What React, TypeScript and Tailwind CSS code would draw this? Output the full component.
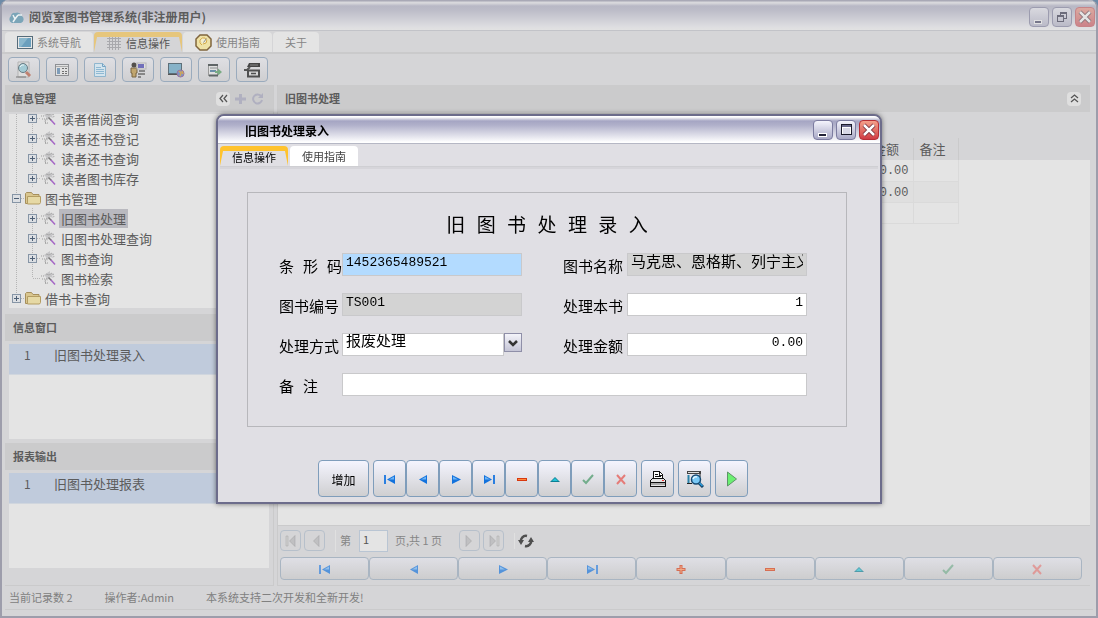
import React, { useState } from "react";
import clsx from "clsx";

type IconProps = { className?: string };

const NavIcon: React.FC<{ name: string }> = ({ name }) => {
  return (
    <svg width="14" height="12" viewBox="0 0 14 12" aria-hidden="true">
      {name === "first" && (
        <>
          <path d="M1 2h2v9H1z" fill="#2b7fe0" />
          <path d="M12 2v9L4 6.5z" fill="#1272dd" />
          <path d="M11 3.5v3H6z" fill="#6db4f5" />
        </>
      )}
      {name === "prev" && (
        <>
          <path d="M11 2v9L3 6.5z" fill="#1272dd" />
          <path d="M10 3.5v3H5z" fill="#6db4f5" />
        </>
      )}
      {name === "next" && (
        <>
          <path d="M3 2v9l9-4.5z" fill="#1272dd" />
          <path d="M4 3.5v3h5z" fill="#6db4f5" />
        </>
      )}
      {name === "last" && (
        <>
          <path d="M11 2h2v9h-2z" fill="#2b7fe0" />
          <path d="M2 2v9l8-4.5z" fill="#1272dd" />
          <path d="M3 3.5v3h5z" fill="#6db4f5" />
        </>
      )}
      {name === "add" && (
        <>
          <path d="M2.5 5h9v3h-9zM5.5 2h3v9h-3z" fill="#d8390f" />
          <path d="M3.5 6h7v1h-7zM6.5 3h1v7h-1z" fill="#ff9660" />
        </>
      )}
      {name === "remove" && (
        <>
          <path d="M2 5h10v3H2z" fill="#d8390f" />
          <path d="M3 6h8v1H3z" fill="#ff8a3c" />
        </>
      )}
      {name === "up" && (
        <>
          <path d="M2 9l5-5 5 5z" fill="#0b7f94" />
          <path d="M4 8l3-3 3 3z" fill="#25c3d6" />
        </>
      )}
      {name === "save" && <path d="M2 7l3 3 7-8" fill="none" stroke="#73ad8c" strokeWidth="2" />}
      {name === "cancel" && <path d="M3 2l8 9M11 2l-8 9" fill="none" stroke="#e57c78" strokeWidth="2" />}
    </svg>
  );
};

const LogoIcon = () => (
  <svg width="17" height="14" viewBox="0 0 17 14" aria-hidden="true">
    <path d="M4 13a4 4 0 0 1-1-7 3 3 0 0 1 4-3 5 5 0 0 1 7 3 4 4 0 0 1-1 7z" fill="#7ba5b8" />
    <path d="M5 5l2 4 3-4M7 9l-2 3M10 5h4" fill="none" stroke="#edf2f4" strokeWidth="1.5" />
  </svg>
);

const ScreenIcon = () => (
  <svg width="16" height="13" viewBox="0 0 16 13" aria-hidden="true">
    <rect x=".5" y=".5" width="15" height="12" fill="#e8e8e8" stroke="#566c7a" />
    <rect x="2" y="2" width="12" height="9" fill="#6a9fbd" />
    <path d="M2 2h9L4 11H2z" fill="#8ab7cd" />
  </svg>
);

const GridIcon = () => (
  <svg width="16" height="16" viewBox="0 0 16 16" aria-hidden="true" shapeRendering="crispEdges">
    <path d="M1 3.5h14M1 6.5h14M1 9.5h14M1 12.5h14M3.5 1v14M6.5 1v14M9.5 1v14M12.5 1v14" stroke="#a9a9ad" fill="none" />
  </svg>
);

const GuideIcon = () => (
  <svg width="17" height="17" viewBox="0 0 17 17" aria-hidden="true">
    <path d="M5 1h7l4 4v7l-4 4H5l-4-4V5z" fill="#efe2a6" stroke="#80653d" strokeWidth="1.5" />
    <path d="M5 6q2-3 5-2 3 3 1 5l-3 1M5 6v3l2 2" fill="#f5efcf" stroke="#d3aa49" />
    <path d="M8.5 8.5l3-4" stroke="#8c8c8c" />
  </svg>
);

const SearchPageIcon = () => (
  <svg width="18" height="18" viewBox="0 0 18 18" aria-hidden="true">
    <path d="M3 1h11v15H3z" fill="#dedede" stroke="#b3b3b3" />
    <circle cx="8" cy="7" r="4.5" fill="#a3cbd5" stroke="#697b83" />
    <path d="M5 6q2-3 4-2" stroke="#e8f4f5" fill="none" />
    <path d="M11 11l4 4" stroke="#bf8170" strokeWidth="3" />
    <path d="M1 16h10" stroke="#7a7a7a" />
  </svg>
);

const DetailIcon = () => (
  <svg width="16" height="16" viewBox="0 0 16 16" aria-hidden="true" shapeRendering="crispEdges">
    <rect x="1.5" y="2.5" width="13" height="11" fill="#e1e1e1" stroke="#8e9094" />
    <path d="M2 4.5h12" stroke="#aaa" />
    <rect x="3" y="6" width="3" height="6" fill="#7f9db9" />
    <path d="M8 6.5h2M11 6.5h2M8 9.5h2M11 9.5h2M8 11.5h2M11 11.5h2" stroke="#707070" />
  </svg>
);

const DocIcon = () => (
  <svg width="16" height="16" viewBox="0 0 16 16" aria-hidden="true">
    <path d="M2.5 1.5h8l3 3v10h-11z" fill="#d4e4ed" stroke="#8fb6ce" />
    <path d="M10.5 1.5v3h3" fill="none" stroke="#72a3c4" />
    <path d="M4 5.5h5M4 7.5h8M4 9.5h8M4 11.5h8" stroke="#8fb9d3" />
  </svg>
);

const UserIcon = () => (
  <svg width="18" height="16" viewBox="0 0 18 16" aria-hidden="true">
    <circle cx="5" cy="3" r="2.5" fill="#53504b" />
    <path d="M2 6h6v5H7v4H3v-4H2z" fill="#c1a66f" stroke="#786744" />
    <rect x="8" y="1" width="9" height="6" fill="#e0e0e0" stroke="#b5b5b5" />
    <rect x="9" y="2" width="6" height="4" fill="#716fba" />
    <path d="M10 9h6M9 12h7M9 15h3" stroke="#6d6d6d" strokeWidth="1.5" />
  </svg>
);

const GlobeScreenIcon = () => (
  <svg width="18" height="16" viewBox="0 0 18 16" aria-hidden="true">
    <rect x="1.5" y="1.5" width="13" height="10" fill="#86b2c8" stroke="#5d6f79" />
    <path d="M1 12.5h12" stroke="#555" />
    <circle cx="13.5" cy="11.5" r="3.5" fill="#7e94c5" stroke="#9a73a0" />
    <path d="M12 9l2 2-1 3M15 9l1 3" stroke="#d0a55a" fill="none" strokeWidth="1.5" />
  </svg>
);

const ImportIcon = () => (
  <svg width="16" height="16" viewBox="0 0 16 16" aria-hidden="true">
    <rect x="2.5" y="2.5" width="9" height="11" fill="#dfdfdf" stroke="#999" />
    <path d="M2 3h10M3 13.5h9" stroke="#5f6566" strokeWidth="2" />
    <path d="M4 6h7" stroke="#8a8f90" />
    <path d="M4 9h6" stroke="#6b8fa8" strokeWidth="2" />
    <path d="M9 9h3V6.5l4 3.5-4 3.5V11H9z" fill="#79ab83" />
  </svg>
);

// printer with its lid tilted back
const PrintIcon = () => (
  <svg width="18" height="16" viewBox="0 0 18 16" aria-hidden="true">
    <path d="M6 1h11v4H4z" fill="#454545" />
    <path d="M7 3h8" stroke="#8b8b8b" />
    <path d="M1 8h3l3-3" fill="none" stroke="#565656" strokeWidth="2" />
    <path d="M5 8.5h11v6H5z" fill="#d8d8d8" stroke="#505050" strokeWidth="2" />
    <path d="M8 11.5h5" stroke="#505050" strokeWidth="1.5" />
  </svg>
);

const PrinterIcon = () => (
  <svg width="18" height="18" viewBox="0 0 18 18" aria-hidden="true" shapeRendering="crispEdges">
    <path d="M4.5 9v-7.5h6l3 3v4.5z" fill="#fff" stroke="#111" />
    <path d="M6 4.5h3M6 6.5h6M10.5 2v3h3" stroke="#111" fill="none" />
    <path d="M3.5 8.5h11l2 2v5.5h-15v-5.5z" fill="#e6e6e6" stroke="#111" />
    <path d="M2 12.5h14" stroke="#111" />
    <path d="M2 14h14" stroke="#aaa" strokeWidth="2" />
    <rect x="13" y="10" width="2" height="1" fill="#e33" />
  </svg>
);

const PreviewIcon = () => (
  <svg width="18" height="18" viewBox="0 0 18 18" aria-hidden="true">
    <path d="M1 1h14v3H1z" fill="#444" />
    <path d="M2 2h11v1H2z" fill="#e0e0e0" />
    <path d="M1.5 5h2v8h-2z" fill="#2b82a8" />
    <path d="M1 13.5h5M14 4v3" stroke="#222" />
    <circle cx="10" cy="9.5" r="4.5" fill="#79c8f5" stroke="#174a72" strokeWidth="1.5" />
    <path d="M7 9q1-3 4-2" stroke="#e3f6ff" fill="none" strokeWidth="1.5" />
    <path d="M13 13l4 4" stroke="#123f60" strokeWidth="3" />
    <path d="M13.5 13l3 3" stroke="#2fa0e0" strokeWidth="1.5" />
  </svg>
);

const PlayIcon = () => (
  <svg width="14" height="16" viewBox="0 0 14 16" aria-hidden="true">
    <path d="M2.5 1v14l9-7z" fill="#6bf072" stroke="#5d9468" />
  </svg>
);

const RefreshIcon = () => (
  <svg width="16" height="16" viewBox="0 0 16 16" aria-hidden="true">
    <path d="M3 9a5 5 0 0 1 6-6M13 7a5 5 0 0 1-6 6" fill="none" stroke="#4f4f4f" strokeWidth="2.5" />
    <path d="M0 7h6l-3 5zM16 9h-6l3-5z" fill="#4f4f4f" />
  </svg>
);

const FolderIcon = () => (
  <svg width="16" height="14" viewBox="0 0 16 14" className="shrink-0" aria-hidden="true">
    <path d="M.5 12.5v-10l1-1h5l1.5 2h6v9z" fill="#d9c68f" stroke="#a68f5b" />
    <path d="M2.5 5.5h13v6l-1 1.5h-12z" fill="#e6d9a5" stroke="#b49d62" />
  </svg>
);

const WandIcon = () => (
  <svg width="16" height="16" viewBox="0 0 16 16" className="shrink-0" aria-hidden="true">
    <path d="M3 5l3-2 3-2v3l4-1-2 3 2 2-4-1-3 4-1-4z" fill="#c6c6c8" />
    <path d="M5 4l3 1 3-2M6 8l-2 3 1 3" fill="none" stroke="#a9a9a9" />
    <path d="M0 6h4M1 9h3M4 13h3M12 4l1 3" stroke="#9c9c9c" strokeDasharray="1 1" />
    <path d="M7.5 7.5l3 3" stroke="#777" strokeWidth="1.5" />
    <path d="M10 10l4 4.5" stroke="#a566c6" strokeWidth="1.5" />
  </svg>
);

const PageArrow: React.FC<{ bar?: boolean; flip?: boolean }> = ({ bar, flip }) => (
  <svg width="14" height="14" viewBox="0 0 14 14" className={clsx(flip && "rotate-180")} aria-hidden="true">
    {bar && <path d="M2 2h2v10H2z" fill="#cfcfcf" stroke="#a4a4a6" strokeWidth=".5" />}
    <path d="M11 1.5v11L5.5 7z" fill="#c0c0c2" stroke="#9f9fa1" strokeWidth=".5" />
  </svg>
);

const Chevrons: React.FC<IconProps> = ({ className }) => (
  <svg width="11" height="11" viewBox="0 0 11 11" className={className} aria-hidden="true">
    <path d="M5 2L2 5.5 5 9M9 2L6 5.5 9 9" fill="none" stroke="#555" strokeWidth="1.25" />
  </svg>
);

// one 16px cell of the tree: dotted guide lines with an optional expander box
const TreeCell: React.FC<{ box?: "plus" | "minus"; end?: boolean; branch?: boolean }> = ({ box, end, branch }) => (
  <svg width="16" height="20" viewBox="0 0 16 20" className="shrink-0" aria-hidden="true" shapeRendering="crispEdges">
    <path d={end ? "M7.5 0v10" : "M7.5 0v20"} stroke="#b5b5b5" strokeDasharray="1 1" />
    {branch && <path d="M8 10.5h8" stroke="#b5b5b5" strokeDasharray="1 1" />}
    {box && (
      <>
        <rect x="3.5" y="6.5" width="8" height="8" fill="#dcdfe3" stroke="#8695a6" />
        <path d="M5 10.5h5" stroke="#4d5f75" />
        {box === "plus" && <path d="M7.5 8v5" stroke="#4d5f75" />}
      </>
    )}
  </svg>
);

const treeRows = [
  { label: "读者借阅查询", level: 2, open: false },
  { label: "读者还书登记", level: 2, open: false },
  { label: "读者还书查询", level: 2, open: false },
  { label: "读者图书库存", level: 2, open: false },
  { label: "图书管理", level: 1, open: true },
  { label: "旧图书处理", level: 2, open: false },
  { label: "旧图书处理查询", level: 2, open: false },
  { label: "图书查询", level: 2, open: false },
  { label: "图书检索", level: 2, open: false, leaf: true },
  { label: "借书卡查询", level: 1, open: false, end: true },
];

const tools = [
  { label: "查找", icon: <SearchPageIcon /> },
  { label: "明细", icon: <DetailIcon /> },
  { label: "文档", icon: <DocIcon /> },
  { label: "用户", icon: <UserIcon /> },
  { label: "网络", icon: <GlobeScreenIcon /> },
  { label: "导入", icon: <ImportIcon /> },
  { label: "打印", icon: <PrintIcon /> },
];

const gridNav = [
  ["first", "首记录"],
  ["prev", "上一条"],
  ["next", "下一条"],
  ["last", "末记录"],
  ["add", "新增"],
  ["remove", "删除"],
  ["up", "编辑"],
  ["save", "保存"],
  ["cancel", "取消"],
];

const Tab: React.FC<{ label: string; active?: boolean; dim?: boolean; icon?: React.ReactNode }> = ({ label, active, dim, icon }) => (
  <button
    type="button"
    className={clsx(
      "h-5 rounded-t-sm text-[11px] leading-4",
      active && dim && "bg-[#e6c67c] pt-[5px] text-[#555]",
      active && !dim && "bg-[#ffc32e] pt-[5px] text-black",
      !active && dim && "bg-[#e4e4e4] text-[#868686]",
      !active && !dim && "bg-white text-[#444]"
    )}
  >
    <span
      className={clsx(
        "flex items-center gap-1 px-3",
        active && "h-[15px] pb-1 [clip-path:polygon(3px_0,calc(100%-3px)_0,100%_100%,0_100%)]",
        active && dim && "bg-[#d5d5d7]",
        active && !dim && "bg-[#e0dfe4]",
        !active && "h-5"
      )}
    >
      {icon}
      {label}
    </span>
  </button>
);

const ListPanel: React.FC<{ title: string; item: string }> = ({ title, item }) => (
  <section className="pb-1">
    <h2 className="h-[27px] bg-[#cbcbcc] px-2 text-[11px] leading-[27px] font-bold text-[#5c5c5c]">{title}</h2>
    <div className="mx-1 mt-[3px] h-[95px] bg-[#e4e4e4]">
      <table className="w-full">
        <tbody>
          <tr className="h-[30px] border-b border-[#d0d6de] bg-[#c0cbdc] align-top text-[13px] leading-[21px] text-[#5c5c5c]">
            <td className="w-[45px] pl-[15px] text-[12px]">1</td>
            <td>{item}</td>
          </tr>
        </tbody>
      </table>
    </div>
  </section>
);

const MainWindow = () => {
  const [selected, setSelected] = useState<string>("旧图书处理");

  return (
    <div className="flex min-h-screen flex-col rounded-t-lg border-x-2 border-b-2 border-[#9d9dab] bg-[#d5d5d7] text-[#5c5c5c]">
      <header className="flex h-[31px] items-center gap-1 rounded-t-lg border-b border-[#c2c3c8] bg-[linear-gradient(#a9a9b6_0px,#a9a9b6_1px,#d8d8dc_2px,#d8d8dc_3px,#b8b8c5_6px,#bcbcc8_10px,#dedee1_27px,#e2e2e2_30px)] pt-1 pr-px pl-[6px]">
        <LogoIcon />
        <h1 className="flex-1 text-[12px] font-bold">阅览室图书管理系统(非注册用户)</h1>
        <div className="flex gap-[3px]">
          <button type="button" aria-label="最小化" className="flex h-5 w-5 items-end justify-center rounded-sm border border-[#9c9caf] bg-linear-to-b from-[#d9d9df] to-[#bbbbc8] pb-[2px]">
            <svg width="10" height="4" viewBox="0 0 10 4"><rect x=".5" y=".5" width="7" height="3" fill="#77778a" stroke="#e2e2e2" /></svg>
          </button>
          <button type="button" aria-label="还原" className="flex h-5 w-5 items-center justify-center rounded-sm border border-[#9c9caf] bg-linear-to-b from-[#d9d9df] to-[#bbbbc8]">
            <svg width="12" height="12" viewBox="0 0 12 12" shapeRendering="crispEdges"><path d="M4.5 4V1.5h6v6H8M1.5 4.5h6v6h-6zM1 5.5h7M4 2.5h7" fill="none" stroke="#6c6c7b" /></svg>
          </button>
          <button type="button" aria-label="关闭" className="flex h-5 w-5 items-center justify-center rounded-sm border border-[#c78487] bg-linear-to-b from-[#dba9a0] to-[#cb8389]">
            <svg width="14" height="14" viewBox="0 0 14 14"><path d="M2 2l10 10M12 2L2 12" stroke="#7d6870" strokeWidth="4" /><path d="M2 2l10 10M12 2L2 12" stroke="#e4e4e4" strokeWidth="2.5" /></svg>
          </button>
        </div>
      </header>

      <nav className="flex h-[22px] items-end gap-px border-b border-[#cacacb] px-[3px]">
        <Tab dim label="系统导航" icon={<ScreenIcon />} />
        <Tab dim active label="信息操作" icon={<GridIcon />} />
        <Tab dim label="使用指南" icon={<GuideIcon />} />
        <Tab dim label="关于" />
      </nav>

      <div className="flex h-8 items-center gap-[6px] border-t border-[#cacacb] px-[6px]">
        {tools.map((tool) => (
          <button key={tool.label} type="button" aria-label={tool.label} className="flex h-[25px] w-8 items-center justify-center rounded border border-[#9aabbd] bg-linear-to-b from-[#dfdfe3] to-[#cfcfd1]">
            {tool.icon}
          </button>
        ))}
      </div>

      <main className="flex flex-1 gap-[3px] pr-[6px] pl-[3px]">
        <aside className="flex w-[269px] shrink-0 flex-col border-r border-b border-[#cacacb]">
          <div className="flex h-[27px] items-center gap-1 bg-[#cbcbcc] pr-[9px] pl-[7px]">
            <h2 className="flex-1 text-[11px] font-bold">信息管理</h2>
            <button type="button" aria-label="折叠" className="flex h-[14px] w-[14px] items-center justify-center rounded-sm bg-[#dfdfdf]"><Chevrons /></button>
            <button type="button" aria-label="添加">
              <svg width="13" height="13" viewBox="0 0 13 13"><path d="M6.5 2v10M1 7h11" stroke="#b0b0c0" strokeWidth="3" /></svg>
            </button>
            <button type="button" aria-label="刷新">
              <svg width="13" height="13" viewBox="0 0 13 13"><path d="M10 4a4.5 4.5 0 1 0 1 4" fill="none" stroke="#b0b0c0" strokeWidth="2" /><path d="M12 1v5H7z" fill="#b0b0c0" /></svg>
            </button>
          </div>
          <ul className="mx-1 mt-[2px] mb-[6px] flex h-[194px] flex-auto flex-col justify-end overflow-hidden bg-[#e4e4e4]">
            {treeRows.map((row) => (
              <li key={row.label} className="flex h-5 shrink-0 items-center text-[13px] leading-[19px]">
                {row.level === 1 ? (
                  <>
                    <TreeCell box={row.open ? "minus" : "plus"} end={row.end} branch />
                    <FolderIcon />
                  </>
                ) : (
                  <>
                    <TreeCell />
                    <TreeCell box={row.leaf ? undefined : "plus"} end={row.leaf} branch />
                    <WandIcon />
                  </>
                )}
                <button type="button" onClick={() => setSelected(row.label)} className={clsx("ml-[2px] px-[2px]", selected === row.label && "bg-[#b9b9bf]")}>
                  {row.label}
                </button>
              </li>
            ))}
          </ul>
          <ListPanel title="信息窗口" item="旧图书处理录入" />
          <div className="pb-[13px]">
            <ListPanel title="报表输出" item="旧图书处理报表" />
          </div>
        </aside>

        <section className="flex min-w-0 flex-1 flex-col border-b border-l border-[#cacacb]">
          <div className="flex h-[27px] items-center bg-[#cbcbcc] pr-[9px] pl-[7px]">
            <h2 className="flex-1 text-[11px] font-bold">旧图书处理</h2>
            <button type="button" aria-label="收起" className="flex h-[14px] w-[14px] items-center justify-center rounded-sm bg-[#dfdfdf]"><Chevrons className="rotate-90" /></button>
          </div>
          <div className="mt-[26px] flex-1 border-b border-[#cacacb] bg-[#e4e4e4]">
            <div className="bg-[linear-gradient(#d5d5d7_22px,transparent_22px)]">
              <table className="w-[681px] table-fixed border-collapse text-[12px]">
                <thead>
                  <tr className="h-[22px] text-left text-[13px] leading-5">
                    <th className="w-[587px]" />
                    <th className="w-[48px] border-r border-[#cacacb] pl-2 font-normal whitespace-nowrap">金额</th>
                    <th className="border-r border-[#cacacb] pl-[6px] font-normal">备注</th>
                  </tr>
                </thead>
                <tbody className="text-right font-['Liberation_Mono',monospace]">
                  <tr className="h-[21px] border-b border-[#dadada]">
                    <td />
                    <td className="border-r border-[#dadada] pt-[2px] pr-1">0.00</td>
                    <td className="border-r border-[#dadada]" />
                  </tr>
                  <tr className="h-[21px] border-b border-[#dadada] bg-[#dfdfdf]">
                    <td />
                    <td className="border-r border-[#dadada] pt-[2px] pr-1">0.00</td>
                    <td className="border-r border-[#dadada]" />
                  </tr>
                  <tr className="h-[21px] border-b border-[#dadada]">
                    <td />
                    <td className="border-r border-[#dadada]" />
                    <td className="border-r border-[#dadada]" />
                  </tr>
                </tbody>
              </table>
            </div>
          </div>

          <div className="flex h-[29px] items-center pl-[2px] text-[11px] text-[#868686]">
            <button type="button" aria-label="首页" className="flex h-[21px] w-[21px] items-center justify-center rounded-sm border border-[#b7c0cb]"><PageArrow bar /></button>
            <button type="button" aria-label="上一页" className="ml-[3px] flex h-[21px] w-[21px] items-center justify-center rounded-sm border border-[#b7c0cb]"><PageArrow /></button>
            <label className="ml-[10px] flex items-center gap-2 border-l border-[#e0e0e0] pl-1">
              第
              <input defaultValue="1" className="h-[22px] w-[29px] border border-[#b9c5d3] bg-[#e4e4e4] px-[3px] pb-[3px] text-[11px] text-[#555]" />
            </label>
            <span className="ml-[7px] w-[64px]">页,共 1 页</span>
            <button type="button" aria-label="下一页" className="flex h-[21px] w-[21px] items-center justify-center rounded-sm border border-[#b7c0cb]"><PageArrow flip /></button>
            <button type="button" aria-label="末页" className="ml-[3px] flex h-[21px] w-[21px] items-center justify-center rounded-sm border border-[#b7c0cb]"><PageArrow bar flip /></button>
            <button type="button" aria-label="刷新列表" className="ml-[10px] border-l border-[#e0e0e0] pl-[3px]"><RefreshIcon /></button>
          </div>

          <div className="mt-[2px] mb-[5px] flex pr-2 pl-[2px]">
            {gridNav.map(([name, label]) => (
              <button key={name} type="button" aria-label={label} className="flex h-[23px] flex-1 items-center justify-center rounded border border-[#a9b5c2] bg-linear-to-b from-[#dfdfe5] to-[#cdcdce]">
                <span className="opacity-65"><NavIcon name={name} /></span>
              </button>
            ))}
          </div>
        </section>
      </main>

      <footer className="mx-[3px] mb-[6px] flex h-6 items-center gap-8 border-b border-[#cacacb] px-1 text-[11px] text-[#808080]">
        <span>当前记录数 2</span>
        <span>操作者:Admin</span>
        <span>本系统支持二次开发和全新开发!</span>
      </footer>
    </div>
  );
};

const labelStyle = "pt-[6px] whitespace-nowrap text-[15px] leading-5";
const fieldStyle = "h-[23px] w-full min-w-0 border border-[#c9c9cb] px-[3px]";
const formButton = "flex h-[37px] w-[33px] items-center justify-center rounded border border-[#7f9dbb] bg-linear-to-b from-[#f4f4fe] to-[#cfcfd1]";

const EntryDialog = () => {
  const [method, setMethod] = useState<string>("报废处理");

  return (
    <div role="dialog" aria-labelledby="dialog-title" className="flex w-[666px] flex-col rounded-t-lg border-2 border-[#6c6c8b] bg-[#e0dfe4] text-black shadow-[0_0_5px_rgba(0,0,0,0.5)]">
      <header className="flex h-7 items-center rounded-t-md border-b border-[#b5b7c4] bg-[linear-gradient(#ffffff_0px,#ffffff_1px,#a5a5c3_5px,#b0b0ca_9px,#f4f4f8_24px,#ffffff_26px)] pr-px pl-[27px]">
        <h2 id="dialog-title" className="flex-1 pt-[2px] text-[12px] font-bold">旧图书处理录入</h2>
        <div className="flex gap-[3px]">
          <button type="button" aria-label="最小化窗口" className="flex h-5 w-5 items-end justify-center rounded-sm border border-[#7c7ca0] bg-linear-to-b from-[#f4f4fc] to-[#a9a9c6] pb-px">
            <svg width="10" height="5" viewBox="0 0 10 5"><rect x=".5" y=".5" width="8" height="3" fill="#222238" stroke="#fff" /></svg>
          </button>
          <button type="button" aria-label="最大化窗口" className="flex h-5 w-5 items-center justify-center rounded-sm border border-[#7c7ca0] bg-linear-to-b from-[#f4f4fc] to-[#a9a9c6]">
            <svg width="13" height="13" viewBox="0 0 13 13" shapeRendering="crispEdges"><rect x="1.5" y="1.5" width="10" height="10" fill="#d8d8e6" stroke="#1b1b2b" /><path d="M2 3h9" stroke="#68688a" strokeWidth="2" /><path d="M2.5 11V4.5h8V11" fill="none" stroke="#fff" /></svg>
          </button>
          <button type="button" aria-label="关闭窗口" className="flex h-5 w-5 items-center justify-center rounded-sm border border-[#b72f35] bg-linear-to-b from-[#f3a08a] to-[#cf3a44]">
            <svg width="14" height="14" viewBox="0 0 14 14"><path d="M2 2l10 10M12 2L2 12" stroke="#6b2530" strokeWidth="4" /><path d="M2 2l10 10M12 2L2 12" stroke="#fff" strokeWidth="2.5" /></svg>
          </button>
        </div>
      </header>

      <div className="mx-[2px] flex h-[23px] items-end gap-[2px] border-b border-[#cfcfd3]">
        <Tab active label="信息操作" />
        <Tab label="使用指南" />
      </div>

      <form onSubmit={(event) => event.preventDefault()} className="mx-[2px] border-t-2 border-[#d6d5da] px-[27px] pt-[23px] pb-[5px]">
        <div className="w-[600px] border border-[#b7b7bb] px-[31px] pt-5 pb-[27px]">
          <h3 className="mb-[11px] text-center font-['Liberation_Mono','Noto_Sans_CJK_SC',monospace] text-[19px] leading-[29px]">旧 图 书 处 理 录 入</h3>
          <div className="grid grid-cols-[63px_180px_105px_180px] gap-y-[14px] font-['Liberation_Mono','Noto_Sans_CJK_SC',monospace]">
            <label htmlFor="barcode" className={labelStyle}>条 形 码</label>
            <input id="barcode" defaultValue="1452365489521" className={clsx(fieldStyle, "bg-[#b3dbff] pb-1 text-[13px]")} />
            <label htmlFor="bookname" className={clsx(labelStyle, "pr-1 text-right")}>图书名称</label>
            <input id="bookname" readOnly value="马克思、恩格斯、列宁主义" className={clsx(fieldStyle, "bg-[#d3d3d3] pb-2 text-[15px]")} />

            <label htmlFor="bookno" className={labelStyle}>图书编号</label>
            <input id="bookno" readOnly value="TS001" className={clsx(fieldStyle, "bg-[#d3d3d3] pb-1 text-[13px]")} />
            <label htmlFor="copies" className={clsx(labelStyle, "pr-1 text-right")}>处理本书</label>
            <input id="copies" defaultValue="1" className={clsx(fieldStyle, "bg-white pb-1 text-right text-[13px]")} />

            <label htmlFor="method" className={labelStyle}>处理方式</label>
            <div className="flex items-start">
              <select id="method" value={method} onChange={(event) => setMethod(event.target.value)} className={clsx(fieldStyle, "flex-1 appearance-none bg-white pb-1 text-[15px] leading-[17px]")}>
                <option>报废处理</option>
              </select>
              <span className="pointer-events-none flex h-[19px] w-[18px] items-center justify-center border border-[#8f8fa8] bg-linear-to-b from-[#f4f4fa] to-[#c5c5d6]">
                <svg width="10" height="8" viewBox="0 0 10 8" aria-hidden="true"><path d="M1 2l4 4 4-4" fill="none" stroke="#333" strokeWidth="2.5" /></svg>
              </span>
            </div>
            <label htmlFor="amount" className={clsx(labelStyle, "pr-1 text-right")}>处理金额</label>
            <input id="amount" defaultValue="0.00" className={clsx(fieldStyle, "bg-white pb-1 text-right text-[13px]")} />

            <label htmlFor="remark" className={labelStyle}>备 注</label>
            <input id="remark" className={clsx(fieldStyle, "col-span-3 bg-white pb-1 text-[15px]")} />
          </div>
        </div>

        <div className="mt-[33px] flex gap-1 pl-[71px]">
          <button type="button" className="h-[37px] w-[51px] rounded border border-[#7f9dbb] bg-linear-to-b from-[#f4f4fe] to-[#cfcfd1] pt-[2px] text-[12px]">增加</button>
          <div className="flex">
            {gridNav.filter(([name]) => name !== "add").map(([name, label]) => (
              <button key={name} type="button" aria-label={label} className={formButton}>
                <NavIcon name={name} />
              </button>
            ))}
          </div>
          <button type="button" aria-label="打印表单" className={formButton}><PrinterIcon /></button>
          <button type="button" aria-label="打印预览" className={formButton}><PreviewIcon /></button>
          <button type="button" aria-label="执行" className={formButton}><PlayIcon /></button>
        </div>
      </form>
    </div>
  );
};

const App: React.FC = () => {
  return (
    <div className="min-h-screen bg-[#6d8ba8] font-['Noto_Sans_CJK_SC',sans-serif]">
      <MainWindow />
      <div className="fixed inset-0 flex items-center justify-center">
        <EntryDialog />
      </div>
    </div>
  );
};

export default App;
